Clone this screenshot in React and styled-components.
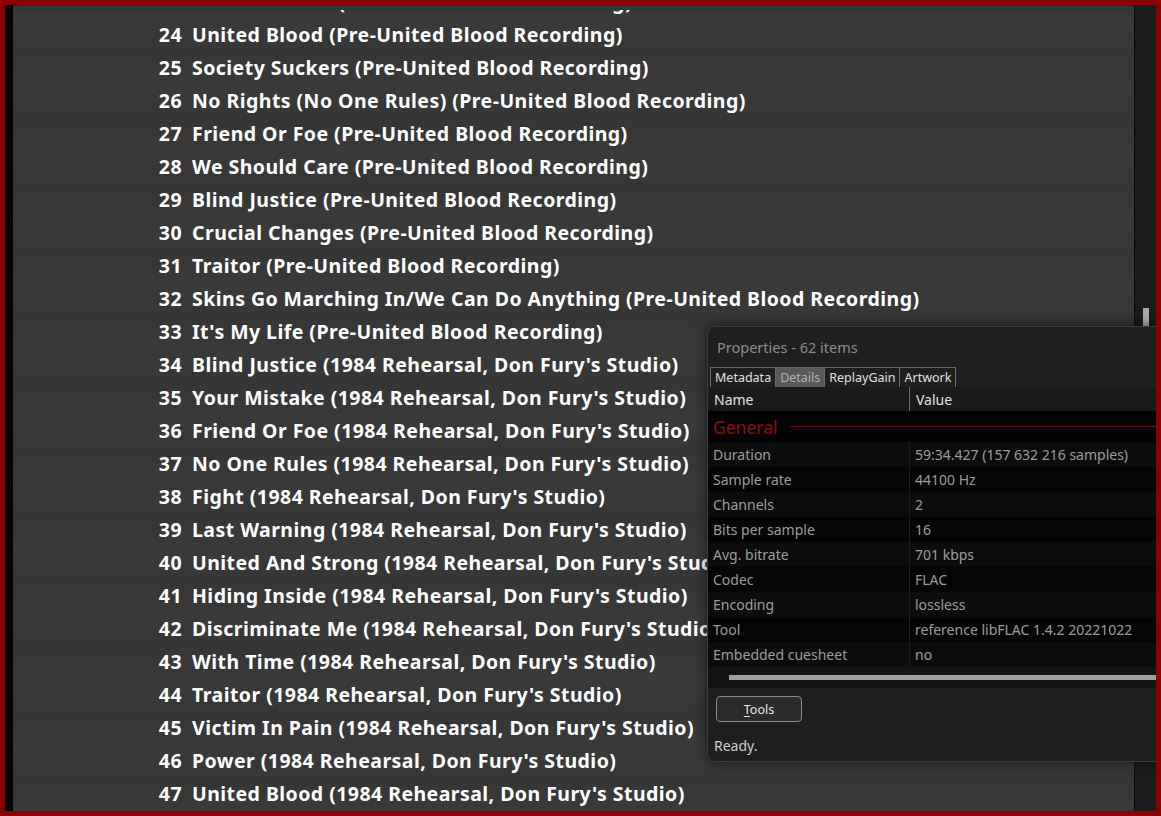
import React from 'react';
import styled, { createGlobalStyle } from 'styled-components';

const GlobalStyle = createGlobalStyle`
  html, body {
    margin: 0;
    padding: 0;
    background: #8b0000;
  }
  body {
    font-family: "Noto Sans", "Open Sans", sans-serif;
  }
`;

const Frame = styled.div`
  width: 1161px;
  height: 816px;
  box-sizing: border-box;
  border: 5px solid #8a0000;
  background: #8a0000;
`;

const Inner = styled.div`
  position: relative;
  display: flex;
  height: 100%;
  overflow: hidden;
`;

const LeftStrip = styled.div`
  width: 8px;
  flex: none;
  background: #000;
`;

const ListArea = styled.div`
  flex: 1;
  display: flex;
  flex-direction: column;
  background: #383838;
  border-right: 1px solid #0c0c0c;
  overflow: hidden;
`;

const TopEdge = styled.div`
  height: 5px;
  flex: none;
  background: #353535;
  border-top: 1px dotted #1a1a1a;
  box-sizing: border-box;
`;

const Viewport = styled.div`
  flex: 1;
  overflow: hidden;
`;

const Rows = styled.div`
  margin-top: -25px;
  display: flex;
  flex-direction: column;
`;

const Row = styled.div`
  height: 33px;
  flex: none;
  display: flex;
  align-items: center;
  gap: 10px;
  padding-left: 134px;
  background: ${(p) =>
    p.$odd
      ? 'linear-gradient(#3a3a3a, #363636)'
      : 'linear-gradient(#353535, #393939)'};
  color: #fff;
  font-family: "Noto Sans", "Open Sans", sans-serif;
  font-weight: 700;
  font-size: 19.5px;
  letter-spacing: 0.45px;
  white-space: nowrap;
`;

const Num = styled.span`
  width: 35px;
  text-align: right;
`;

const ScrollTrack = styled.div`
  width: 21px;
  flex: none;
  background: #1b1b1b;
  position: relative;
`;

const Thumb = styled.div`
  position: absolute;
  left: 8px;
  top: 303px;
  width: 6px;
  height: 20px;
  background: #a8a8a8;
`;

const Dialog = styled.div`
  position: absolute;
  left: 702px;
  top: 321px;
  width: 470px;
  height: 434px;
  background: #1f1f1f;
  border: 1px solid #3c3c3c;
  border-radius: 8px;
  box-shadow: 0 0 12px rgba(0, 0, 0, 0.6);
  display: flex;
  flex-direction: column;
  font-family: "Noto Sans", "Open Sans", sans-serif;
`;

const Title = styled.div`
  height: 40px;
  padding-left: 9px;
  display: flex;
  align-items: center;
  color: #8c8c8c;
  font-size: 14.5px;
`;

const Tabs = styled.div`
  display: flex;
  padding-left: 2px;
  height: 20px;
`;

const Tab = styled.div`
  padding: 0 4px;
  display: flex;
  align-items: center;
  font-size: 12.5px;
  color: ${(p) => (p.$active ? '#b0b0b0' : '#e0e0e0')};
  background: ${(p) => (p.$active ? '#5a5a5a' : '#1f1f1f')};
  border: 1px solid #6a6a6a;
  border-bottom: none;
  border-left-width: ${(p) => (p.$first ? '1px' : '0')};
`;

const HeaderRow = styled.div`
  display: flex;
  height: 24px;
  background: #1a1a1a;
  color: #e2e2e2;
  font-size: 14px;
`;

const HeadCell = styled.div`
  width: ${(p) => p.$w || 'auto'};
  flex: ${(p) => (p.$w ? 'none' : '1')};
  padding-left: 6px;
  display: flex;
  align-items: center;
  border-left: ${(p) => (p.$divider ? '1px solid #6a6a6a' : 'none')};
  box-sizing: border-box;
`;

const Body = styled.div`
  background: #030303;
  display: flex;
  flex-direction: column;
`;

const Group = styled.div`
  height: 31px;
  display: flex;
  align-items: center;
  gap: 12px;
  padding-left: 5px;
  color: #8a0e0e;
  font-size: 17.5px;
`;

const GroupLine = styled.div`
  flex: 1;
  height: 1px;
  background: #6e0a0a;
`;

const PropRow = styled.div`
  display: flex;
  height: 25px;
  background: ${(p) => (p.$odd ? '#050505' : '#0c0c0c')};
  color: #9c9c9c;
  font-size: 14px;
`;

const Cell = styled.div`
  width: ${(p) => p.$w || 'auto'};
  flex: ${(p) => (p.$w ? 'none' : '1')};
  padding-left: 5px;
  display: flex;
  align-items: center;
  box-sizing: border-box;
  border-left: ${(p) => (p.$divider ? '1px solid #1e1e1e' : 'none')};
  white-space: nowrap;
`;

const HScroll = styled.div`
  height: 21px;
  background: #131313;
  display: flex;
  align-items: center;
  padding-left: 21px;
`;

const HBar = styled.div`
  flex: 1;
  height: 5px;
  background: #a0a0a0;
`;

const Footer = styled.div`
  padding: 8px 8px 0 8px;
  display: flex;
  flex-direction: column;
  gap: 14px;
`;

const Button = styled.button`
  width: 86px;
  height: 26px;
  background: #2b2b2b;
  border: 1px solid #8a8a8a;
  border-radius: 4px;
  color: #e4e4e4;
  font-family: "Noto Sans", "Open Sans", sans-serif;
  font-size: 12.5px;
  padding: 0;
  u {
    text-underline-offset: 2px;
  }
`;

const Status = styled.div`
  color: #cfcfcf;
  font-size: 14px;
  margin-left: -2px;
`;

const tracks = [
  [23, 'Victim In Pain (Pre-United Blood Recording)'],
  [24, 'United Blood (Pre-United Blood Recording)'],
  [25, 'Society Suckers (Pre-United Blood Recording)'],
  [26, 'No Rights (No One Rules) (Pre-United Blood Recording)'],
  [27, 'Friend Or Foe (Pre-United Blood Recording)'],
  [28, 'We Should Care (Pre-United Blood Recording)'],
  [29, 'Blind Justice (Pre-United Blood Recording)'],
  [30, 'Crucial Changes (Pre-United Blood Recording)'],
  [31, 'Traitor (Pre-United Blood Recording)'],
  [32, 'Skins Go Marching In/We Can Do Anything (Pre-United Blood Recording)'],
  [33, "It's My Life (Pre-United Blood Recording)"],
  [34, "Blind Justice (1984 Rehearsal, Don Fury's Studio)"],
  [35, "Your Mistake (1984 Rehearsal, Don Fury's Studio)"],
  [36, "Friend Or Foe (1984 Rehearsal, Don Fury's Studio)"],
  [37, "No One Rules (1984 Rehearsal, Don Fury's Studio)"],
  [38, "Fight (1984 Rehearsal, Don Fury's Studio)"],
  [39, "Last Warning (1984 Rehearsal, Don Fury's Studio)"],
  [40, "United And Strong (1984 Rehearsal, Don Fury's Studio)"],
  [41, "Hiding Inside (1984 Rehearsal, Don Fury's Studio)"],
  [42, "Discriminate Me (1984 Rehearsal, Don Fury's Studio)"],
  [43, "With Time (1984 Rehearsal, Don Fury's Studio)"],
  [44, "Traitor (1984 Rehearsal, Don Fury's Studio)"],
  [45, "Victim In Pain (1984 Rehearsal, Don Fury's Studio)"],
  [46, "Power (1984 Rehearsal, Don Fury's Studio)"],
  [47, "United Blood (1984 Rehearsal, Don Fury's Studio)"],
];

const props = [
  ['Duration', '59:34.427 (157 632 216 samples)'],
  ['Sample rate', '44100 Hz'],
  ['Channels', '2'],
  ['Bits per sample', '16'],
  ['Avg. bitrate', '701 kbps'],
  ['Codec', 'FLAC'],
  ['Encoding', 'lossless'],
  ['Tool', 'reference libFLAC 1.4.2 20221022'],
  ['Embedded cuesheet', 'no'],
];

const tabs = ['Metadata', 'Details', 'ReplayGain', 'Artwork'];

export default function App() {
  return (
    <>
      <GlobalStyle />
      <Frame>
        <Inner>
          <LeftStrip />
          <ListArea>
            <TopEdge />
            <Viewport>
              <Rows>
                {tracks.map(([n, t], i) => (
                  <Row key={n} $odd={i % 2 === 1}>
                    <Num>{n}</Num>
                    <span>{t}</span>
                  </Row>
                ))}
              </Rows>
            </Viewport>
          </ListArea>
          <ScrollTrack>
            <Thumb />
          </ScrollTrack>

          <Dialog>
            <Title>Properties - 62 items</Title>
            <Tabs>
              {tabs.map((t, i) => (
                <Tab key={t} $first={i === 0} $active={t === 'Details'}>
                  {t}
                </Tab>
              ))}
            </Tabs>
            <HeaderRow>
              <HeadCell $w="201px">Name</HeadCell>
              <HeadCell $divider>Value</HeadCell>
            </HeaderRow>
            <Body>
              <Group>
                General
                <GroupLine />
              </Group>
              {props.map(([k, v], i) => (
                <PropRow key={k} $odd={i % 2 === 1}>
                  <Cell $w="201px">{k}</Cell>
                  <Cell $divider>{v}</Cell>
                </PropRow>
              ))}
            </Body>
            <HScroll>
              <HBar />
            </HScroll>
            <Footer>
              <Button>
                <u>T</u>ools
              </Button>
              <Status>Ready.</Status>
            </Footer>
          </Dialog>
        </Inner>
      </Frame>
    </>
  );
}
